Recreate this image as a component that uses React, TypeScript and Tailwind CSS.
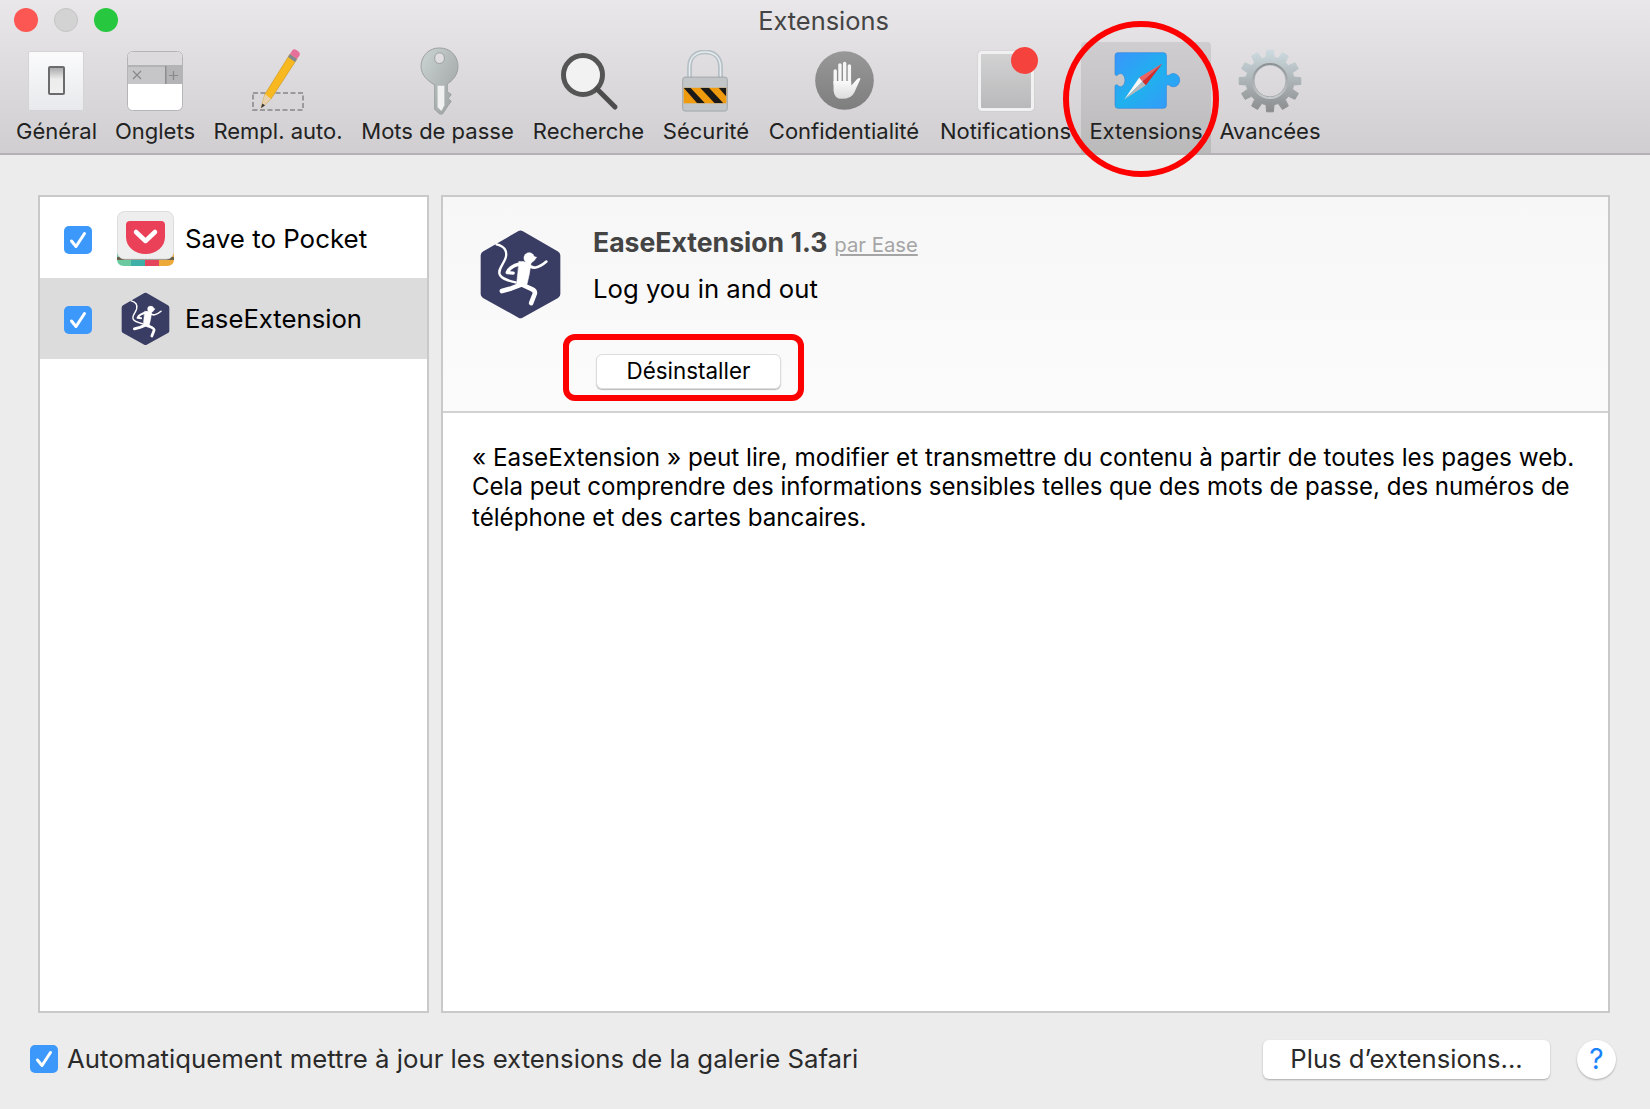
import React from 'react';

const FONT = '[font-family:Inter,"Liberation_Sans",sans-serif]';

const Monkey = () => (
  <g fill="none" stroke="#fff" strokeLinecap="round" strokeLinejoin="round">
    {/* tail */}
    <path d="M78 73 C100 78 112 92 105 115 C98 135 80 150 88 165 C95 178 115 183 135 188" strokeWidth="7" />
    {/* arms */}
    <path d="M158 130 C135 135 118 140 110 158 L128 160" strokeWidth="10" />
    <path d="M170 132 C185 150 205 145 228 125" strokeWidth="8" />
    {/* legs */}
    <path d="M150 195 L122 206 L94 214" strokeWidth="14" />
    <path d="M155 195 C175 205 197 208 193 222 L182 250" strokeWidth="14" />
    {/* torso and head */}
    <path d="M146 125 L182 128 L176 165 L169 195 L138 195 L142 160 Z" fill="#fff" strokeWidth="2" />
    <circle cx="176" cy="114" r="16" fill="#fff" strokeWidth="1" />
    <path d="M186 108 L199 112 L190 124 Z" fill="#fff" strokeWidth="1" />
  </g>
);

const EaseLogo = ({ className }: { className: string }) => (
  <svg viewBox="28 28 244 272" className={className}>
    <path d="M144 33 Q150 30 156 33 L263 95 Q270 99 270 107 L270 223 Q270 231 263 235 L156 294 Q150 297 144 294 L37 235 Q30 231 30 223 L30 107 Q30 99 37 95 Z" fill="#393c63" />
    <Monkey />
  </svg>
);

const Check = ({ className = '' }: { className?: string }) => (
  <span className={`flex h-[28px] w-[28px] shrink-0 items-center justify-center rounded-[5px] bg-[#3d98fb] ${className}`}>
    <svg viewBox="0 0 28 28" className="h-[28px] w-[28px]">
      <path d="M7.5 15 L12 20.5 L20.5 7.5" fill="none" stroke="#fff" strokeWidth="3" strokeLinecap="round" strokeLinejoin="round" />
    </svg>
  </span>
);

const GeneralIcon = () => (
  <svg viewBox="0 0 56 60" className="-ml-[2px] h-[60px] w-[56px]">
    <defs>
      <linearGradient id="gen" x1="0" y1="0" x2="0" y2="1">
        <stop offset="0" stopColor="#fbfbfc" />
        <stop offset="1" stopColor="#e8e9ec" />
      </linearGradient>
      <linearGradient id="genS" x1="0" y1="0" x2="0" y2="1">
        <stop offset="0" stopColor="#a5a5a5" />
        <stop offset="0.45" stopColor="#ececec" />
        <stop offset="1" stopColor="#f0f0f0" />
      </linearGradient>
    </defs>
    <rect x="0.5" y="0.5" width="55" height="59" rx="1.5" fill="url(#gen)" stroke="#d4d4d6" />
    <rect x="21" y="16" width="15" height="27" rx="1" fill="url(#genS)" stroke="#6b6b6d" strokeWidth="2" />
  </svg>
);

const TabsIcon = () => (
  <svg viewBox="0 0 56 60" className="h-[60px] w-[56px]">
    <rect x="0.5" y="0.5" width="55" height="59" rx="5" fill="#fff" stroke="#b5b4b6" />
    <path d="M1 5.5 Q1 1 5.5 1 L50.5 1 Q55 1 55 5.5 L55 15 L1 15 Z" fill="#dcdadc" />
    <rect x="1" y="15" width="54" height="18" fill="#c6c5c7" />
    <rect x="1" y="14" width="54" height="2" fill="#b3b2b4" />
    <rect x="38" y="15" width="17" height="18" fill="#b4b3b5" />
    <rect x="38" y="15" width="1.5" height="18" fill="#8e8d8f" />
    <path d="M6 20 L14 28 M14 20 L6 28 M42 24.5 H51 M46.5 20 V29" stroke="#888789" strokeWidth="1.2" />
  </svg>
);

const PencilIcon = () => (
  <svg viewBox="0 0 56 66" className="h-[66px] w-[56px]">
    <rect x="3" y="45" width="50" height="17" fill="none" stroke="#9a999b" strokeWidth="2" strokeDasharray="5 2.5" />
    <path d="M11 60 L15 46 L40 6 L47 11 L21 51 Z" fill="#f7b91f" stroke="#c48a15" strokeWidth="0.5" />
    <path d="M11 60 L15 46 L21 51 Z" fill="#e8d2ae" />
    <path d="M11 60 L12.4 55.5 L15 57.5 Z" fill="#333" />
    <path d="M38 9 L45 14 L47 11 L40 6 Z" fill="#7f8a92" />
    <path d="M40 6 L42.5 2 Q44 0.5 46.5 2 L49 4 Q50.5 5.5 49.5 7.5 L47 11 Z" fill="#e6709a" />
  </svg>
);

const KeyIcon = () => (
  <svg viewBox="0 0 44 70" className="ml-[5px] h-[68px] w-[43px]">
    <defs>
      <linearGradient id="key" x1="0" y1="0" x2="1" y2="1">
        <stop offset="0" stopColor="#ccd4d4" />
        <stop offset="1" stopColor="#9a9e9f" />
      </linearGradient>
    </defs>
    <path fillRule="evenodd" d="M21 1 C32 1 40 9 40 20 C40 29 34 35 29 38 L29 46 L33 49 L30 53 L33 56 L30 60 L24 69 L21 69 L16 64 L16 39 C9 35 2 29 2 20 C2 9 10 1 21 1 Z M21 6 C18 6 16 8 16 11.5 C16 15 18 17 21 17 C24 17 26 15 26 11.5 C26 8 24 6 21 6 Z" fill="url(#key)" stroke="#9a9e9f" />
    <path d="M19 40 L19 62 L23 66 L26 60 L26 40 Z" fill="#f0f0f0" />
  </svg>
);

const SearchIcon = () => (
  <svg viewBox="0 0 60 60" className="h-[60px] w-[60px]">
    <circle cx="24" cy="24" r="19.5" fill="#f2f2f2" stroke="#565556" strokeWidth="5" />
    <path d="M38 38 L56 56" stroke="#4d4c4d" strokeWidth="5" strokeLinecap="round" />
  </svg>
);

const LockIcon = () => (
  <svg viewBox="0 0 48 64" className="mr-[3px] h-[62px] w-[48px]">
    <defs>
      <clipPath id="lockBand">
        <rect x="2" y="39" width="44" height="16" />
      </clipPath>
    </defs>
    <path d="M8 30 L8 18 C8 8 14 2 24 2 C34 2 40 8 40 18 L40 30" fill="none" stroke="#b4c0c6" strokeWidth="5" />
    <path d="M8 30 L8 18 C8 8 14 2 24 2 C34 2 40 8 40 18 L40 30" fill="none" stroke="#e8ecee" strokeWidth="1.5" />
    <rect x="1" y="28" width="46" height="35" rx="2.5" fill="#c2c6c9" stroke="#a0a3a6" />
    <rect x="2" y="39" width="44" height="16" fill="#f09a0e" />
    <g clipPath="url(#lockBand)" fill="#1c1a18">
      <path d="M2 39 H9 L24 55 H16 Z" />
      <path d="M19 39 H28 L43 55 H34 Z" />
      <path d="M38 39 H46 V48 Z" />
    </g>
  </svg>
);

const HandIcon = () => (
  <svg viewBox="135 33 175 175" className="h-[59px] w-[59px]">
    <defs>
      <linearGradient id="handBg" x1="0" y1="0" x2="0" y2="1">
        <stop offset="0" stopColor="#989898" />
        <stop offset="1" stopColor="#7e7e7e" />
      </linearGradient>
      <linearGradient id="handFg" x1="0" y1="0" x2="0" y2="1">
        <stop offset="0" stopColor="#ffffff" />
        <stop offset="1" stopColor="#dcdcdc" />
      </linearGradient>
    </defs>
    <circle cx="222.5" cy="120.5" r="87" fill="url(#handBg)" />
    <g stroke="#f6f6f6" strokeWidth="10" strokeLinecap="round">
      <path d="M195 92 V130" />
      <path d="M209 74 V130" />
      <path d="M223 70 V130" />
      <path d="M237 77 V130" />
    </g>
    <path d="M190 122 L242 122 L243 135 L258 118 Q266 110 270 115 L252 155 Q243 175 215 175 Q192 175 190 150 Z" fill="url(#handFg)" />
  </svg>
);

const NotifIcon = () => (
  <div className="relative h-[60px] w-[56px]">
    <div className="h-[60px] w-[56px] rounded-[4px] border-[3px] border-[#f1f1f1] bg-gradient-to-b from-[#d3d2d3] to-[#b9b8ba] shadow-[0_0_1px_#999]" />
    <div className="absolute left-[33px] top-[-4px] h-[27px] w-[27px] rounded-full bg-[#f6423c]" />
  </div>
);

const ExtIcon = () => (
  <svg viewBox="40 35 200 172" className="ml-[2px] h-[57px] w-[67px]">
    <defs>
      <linearGradient id="ext" x1="0" y1="0" x2="1" y2="1">
        <stop offset="0" stopColor="#3a95fb" />
        <stop offset="0.5" stopColor="#1fb1ee" />
        <stop offset="1" stopColor="#3a95fb" />
      </linearGradient>
    </defs>
    <path d="M50 37 H188 Q197 37 197 46 V100 C197 107 203 108 208 103 C218 96 237 102 237 120 C237 138 218 144 208 137 C203 132 197 133 197 140 V196 Q197 205 188 205 H51 Q42 205 42 196 V140 C42 132 48 133 52 137 C60 145 72 135 72 120 C72 105 60 95 52 103 C48 107 42 108 42 100 V46 Q42 37 50 37 Z" fill="url(#ext)" stroke="#2f88e0" strokeWidth="2" />
    <path d="M70 178 L115 112 L125 124 Z" fill="#f6f6f6" />
    <path d="M70 178 L125 124 L135 135 Z" fill="#b5b9bd" />
    <path d="M185 70 L115 112 L125 124 Z" fill="#f0625f" />
    <path d="M185 70 L125 124 L135 135 Z" fill="#d92a2a" />
  </svg>
);

const gearPath = () => {
  const pts: string[] = [];
  const n = 12;
  for (let i = 0; i < n; i++) {
    const c = (i * 2 * Math.PI) / n - Math.PI / 2;
    const corners: [number, number][] = [
      [24, c - 0.17],
      [31, c - 0.11],
      [31, c + 0.11],
      [24, c + 0.17],
    ];
    corners.forEach(([r, a]) => pts.push(`${(32 + r * Math.cos(a)).toFixed(2)} ${(32 + r * Math.sin(a)).toFixed(2)}`));
  }
  return `M${pts.join(' L')} Z M48 32 A16 16 0 1 0 16 32 A16 16 0 1 0 48 32 Z`;
};

const GearIcon = () => (
  <svg viewBox="0 0 64 64" className="h-[64px] w-[64px]">
    <defs>
      <linearGradient id="gear" x1="0" y1="0" x2="0" y2="1">
        <stop offset="0" stopColor="#cddbe0" />
        <stop offset="1" stopColor="#8b8c8d" />
      </linearGradient>
      <linearGradient id="gearIn" x1="0" y1="0" x2="0" y2="1">
        <stop offset="0" stopColor="#8e9193" />
        <stop offset="1" stopColor="#c8cbcd" />
      </linearGradient>
    </defs>
    <path d={gearPath()} fill="url(#gear)" fillRule="evenodd" strokeLinejoin="round" stroke="url(#gear)" strokeWidth="1" />
    <circle cx="32" cy="32" r="17" fill="none" stroke="url(#gearIn)" strokeWidth="2" />
  </svg>
);

const PocketIcon = () => (
  <svg viewBox="0 0 57 55" className="h-[55px] w-[57px]">
    <defs>
      <clipPath id="pk">
        <path d="M0 38 H57 V48 Q57 55 50 55 H7 Q0 55 0 48 Z" />
      </clipPath>
    </defs>
    <g clipPath="url(#pk)">
      <rect x="0" y="38" width="15" height="17" fill="#6bc9a0" />
      <rect x="14" y="38" width="15" height="17" fill="#3fb0a8" />
      <rect x="28" y="38" width="15" height="17" fill="#e4455c" />
      <rect x="42" y="38" width="15" height="17" fill="#eda93a" />
      <rect x="0" y="46" width="57" height="3" fill="#6a5f4a" />
    </g>
    <rect x="0.5" y="0.5" width="56" height="47.5" rx="7" fill="#eeeeee" stroke="#dcdcdc" />
    <path d="M13 10 H44 Q48 10 48 14 V26 C48 36 39 43 28.5 43 C18 43 9 36 9 26 V14 Q9 10 13 10 Z" fill="#ea4058" />
    <path d="M19 21 L28.5 30 L38 21" fill="none" stroke="#fff" strokeWidth="4.5" strokeLinecap="round" strokeLinejoin="round" />
  </svg>
);

const tabs = [
  { label: 'Général', w: 'w-[99px]', icon: <GeneralIcon /> },
  { label: 'Onglets', w: 'w-[98px]', icon: <TabsIcon /> },
  { label: 'Rempl. auto.', w: 'w-[148px]', icon: <PencilIcon /> },
  { label: 'Mots de passe', w: 'w-[171px]', icon: <KeyIcon /> },
  { label: 'Recherche', w: 'w-[131px]', icon: <SearchIcon /> },
  { label: 'Sécurité', w: 'w-[104px]', icon: <LockIcon /> },
  { label: 'Confidentialité', w: 'w-[172px]', icon: <HandIcon /> },
  { label: 'Notifications', w: 'w-[151px]', icon: <NotifIcon /> },
  { label: 'Extensions', w: 'w-[130px]', icon: <ExtIcon />, active: true },
  { label: 'Avancées', w: 'w-[118px]', icon: <GearIcon /> },
];

export default function App() {
  return (
    <div className={`relative flex h-[1109px] w-[1650px] flex-col overflow-hidden bg-[#ececec] ${FONT}`}>
      {/* Toolbar */}
      <div className="flex h-[155px] shrink-0 flex-col border-b-2 border-[#b3b1b3] bg-gradient-to-b from-[#e9e7e9] to-[#d0ced0]">
        <div className="relative flex h-[42px] shrink-0 items-center justify-center pr-[3px]">
          <div className="absolute left-[14px] top-[8px] flex gap-[16px]">
            <span className="h-[24px] w-[24px] rounded-full bg-[#fc5753]" />
            <span className="h-[24px] w-[24px] rounded-full border border-[#c4c4c4] bg-[#d3d3d3]" />
            <span className="h-[24px] w-[24px] rounded-full bg-[#27c83f]" />
          </div>
          <span className="text-[25.4px] leading-none text-[#444]">Extensions</span>
        </div>
        <div className="flex flex-1 pl-[7px]">
          {tabs.map((t) => (
            <div
              key={t.label}
              className={`flex shrink-0 flex-col items-center rounded-t-[4px] ${t.w} ${t.active ? 'bg-gradient-to-b from-[#cfcdcf] to-[#bbbabb]' : ''}`}
            >
              <div className="flex h-[75px] w-full items-center justify-center pt-[2px]">{t.icon}</div>
              <span className="whitespace-nowrap text-[22px] leading-[28px] text-[#222]">{t.label}</span>
            </div>
          ))}
        </div>
      </div>

      {/* Panels */}
      <div className="flex h-[858px] shrink-0 gap-[12px] pl-[38px] pr-[40px] pt-[40px]">
        <div className="h-[818px] w-[391px] shrink-0 border-2 border-[#c9c9c9] bg-white">
          <div className="flex h-[81px] items-center pl-[24px] pt-[5px]">
            <Check />
            <span className="-mt-[3px] ml-[25px] flex w-[57px] justify-center"><PocketIcon /></span>
            <span className="-mt-[2px] ml-[11px] text-[25.9px] text-black">Save to Pocket</span>
          </div>
          <div className="flex h-[81px] items-center bg-[#dcdcdc] pl-[24px] pt-[3px]">
            <Check />
            <span className="-mt-[2px] ml-[25px] flex w-[57px] justify-center"><EaseLogo className="h-[54px] w-[49px]" /></span>
            <span className="-mt-[1px] ml-[11px] text-[25.7px] text-black">EaseExtension</span>
          </div>
        </div>

        <div className="flex h-[818px] min-w-0 flex-1 flex-col border-2 border-[#c9c9c9] bg-white">
          <div className="flex h-[216px] shrink-0 border-b-2 border-[#d2d2d2] bg-gradient-to-b from-[#f7f7f7] to-[#fbfbfb] pl-[37px] pt-[30px]">
            <EaseLogo className="mt-[2px] h-[91px] w-[81px] shrink-0" />
            <div className="ml-[32px] flex flex-col">
              <div className="flex items-baseline whitespace-nowrap">
                <span className="text-[26.6px] font-bold leading-[30px] text-[#444]">EaseExtension 1.3</span>
                <span className="ml-[7px] text-[20.3px] leading-[30px] text-[#a5a5a5] underline">par Ease</span>
              </div>
              <span className="mt-[14px] text-[25.7px] leading-[30px] text-black">Log you in and out</span>
              <button className="ml-[3px] mt-[50px] h-[35px] w-[185px] rounded-[6px] border border-[#dcdcdc] bg-white text-[22.4px] leading-none text-black shadow-[0_1px_1px_#bbb]">
                Désinstaller
              </button>
            </div>
          </div>
          <div className="pl-[29px] pt-[29px] leading-[30.4px] text-black">
            <p className="whitespace-nowrap text-[24.27px]">« EaseExtension » peut lire, modifier et transmettre du contenu à partir de toutes les pages web.</p>
            <p className="whitespace-nowrap text-[24.06px]">Cela peut comprendre des informations sensibles telles que des mots de passe, des numéros de</p>
            <p className="text-[24.15px]">téléphone et des cartes bancaires.</p>
          </div>
        </div>
      </div>

      {/* Bottom row */}
      <div className="flex flex-1 items-center pb-[4px] pl-[30px] pr-[34px]">
        <Check />
        <span className="ml-[9px] whitespace-nowrap text-[25.75px] text-[#2a2a2a]">
          Automatiquement mettre à jour les extensions de la galerie Safari
        </span>
        <button className="ml-auto h-[39px] w-[287px] rounded-[6px] bg-white text-[25.65px] leading-none text-[#2a2a2a] shadow-[0_1px_2px_#aaa]">
          Plus d’extensions...
        </button>
        <span className="ml-[27px] flex h-[39px] w-[39px] items-center justify-center rounded-full bg-white text-[28px] leading-none text-[#1a82fb] shadow-[0_1px_2px_#aaa]">
          ?
        </span>
      </div>

      {/* Red annotations */}
      <div className="absolute left-[1063px] top-[21px] h-[156px] w-[156px] rounded-full border-[6px] border-[#fe0000]" />
      <div className="absolute left-[563px] top-[334px] h-[67px] w-[241px] rounded-[12px] border-[6px] border-[#fe0000]" />
    </div>
  );
}
